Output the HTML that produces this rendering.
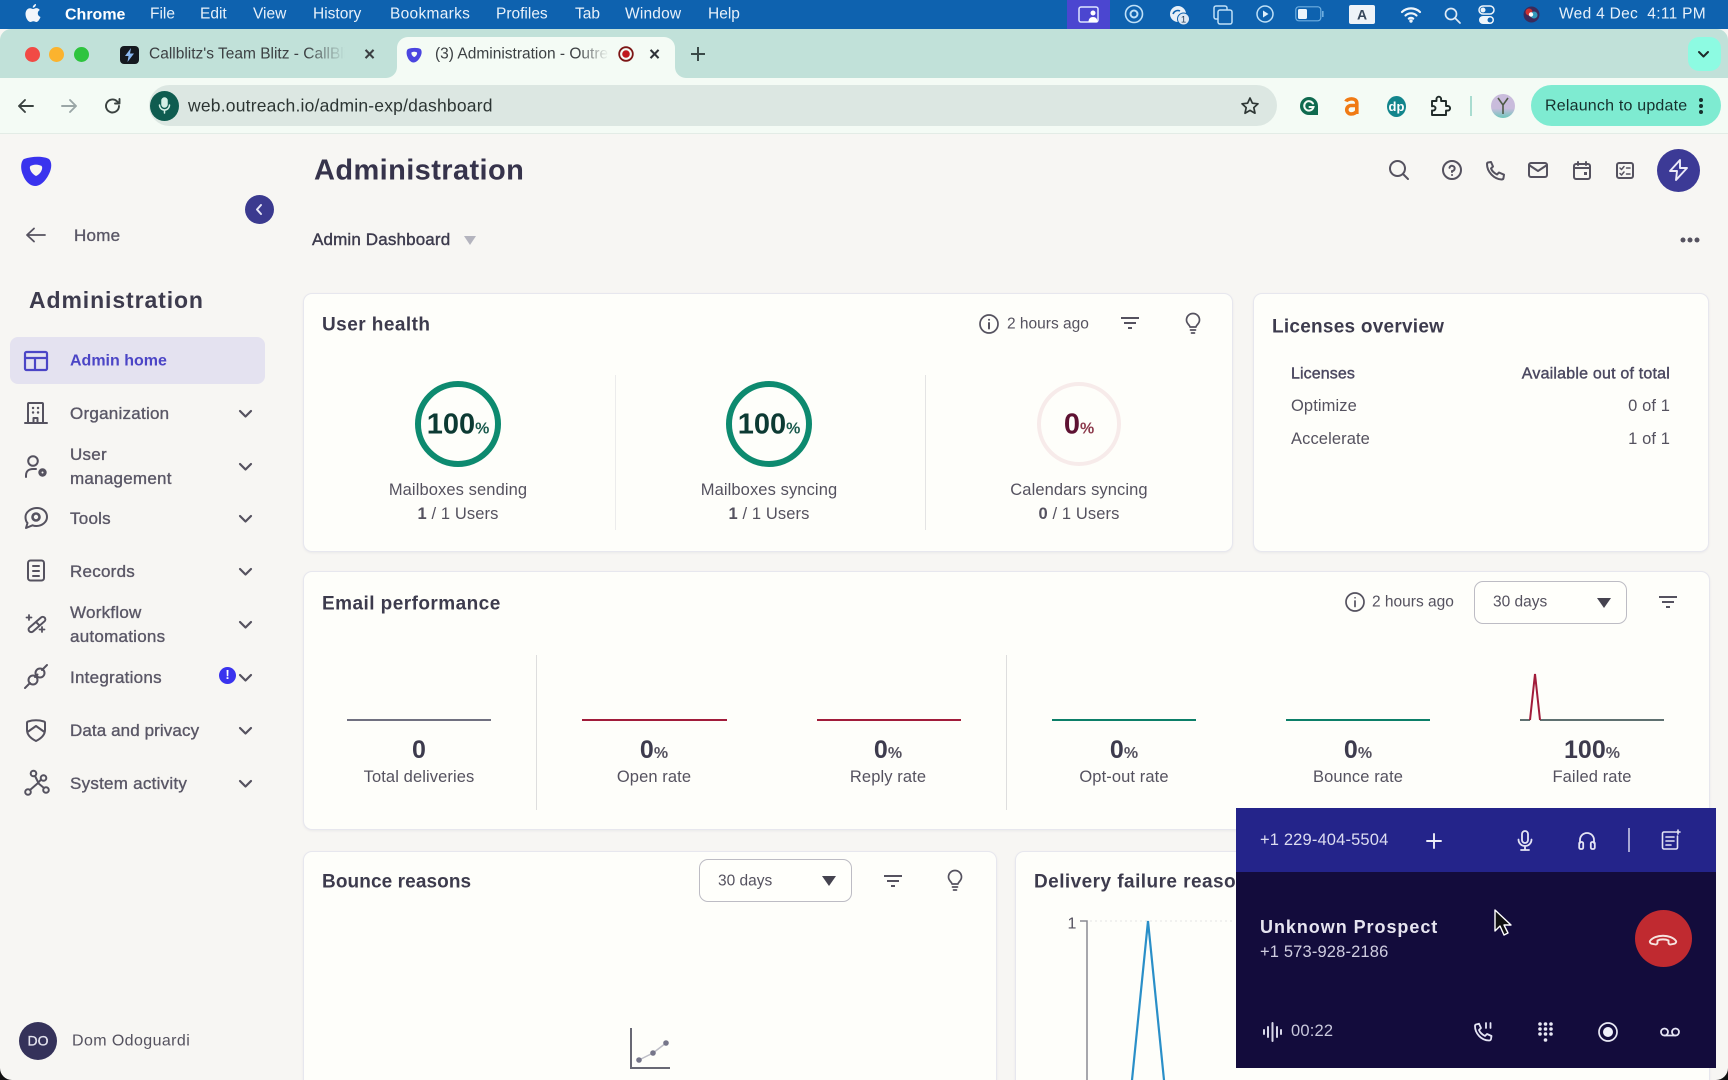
<!DOCTYPE html>
<html lang="en"><head><meta charset="utf-8"><title>Administration - Outreach</title>
<style>
*{box-sizing:border-box}
html,body{margin:0;padding:0;width:1728px;height:1080px;overflow:hidden;background:#f7f6f3;font-family:"Liberation Sans",sans-serif;color:#55525f}
#root{position:relative;width:1728px;height:1080px;overflow:hidden;background:#f7f6f3}
.a{position:absolute}
.t{position:absolute;white-space:nowrap;transform:translateY(calc(-50% + 1px));line-height:1.2}
.c{position:absolute;white-space:nowrap;transform:translate(-50%,calc(-50% + 1px));line-height:1.2}
.r{position:absolute;white-space:nowrap;transform:translate(-100%,calc(-50% + 1px));line-height:1.2}
.m{font-size:15.5px;color:#e8f1fa;margin-top:1px}
.nav{font-size:17px;letter-spacing:.25px;color:#5a5766;-webkit-text-stroke:.35px #5a5766;margin-top:1px}
.card{position:absolute;background:#fefefa;border:1px solid #e7e7ee;border-radius:9px;box-shadow:0 1px 2px rgba(90,90,130,.08)}
.h{font-size:19px;font-weight:bold;color:#3d3b4d;letter-spacing:.45px;margin-top:2px}
.lb{font-size:16.5px;letter-spacing:.1px;color:#55525f;margin-top:1px}
.num{font-size:25px;font-weight:bold;color:#3d3b4d}
.num small{font-size:16px;font-weight:bold;color:#55525f}
svg{position:absolute;overflow:visible;fill:none}
.i{stroke:#55525f;stroke-width:2;stroke-linecap:round;stroke-linejoin:round}
.w{stroke:#e4e4f4;stroke-width:1.8;stroke-linecap:round;stroke-linejoin:round}
.sel{position:absolute;width:153px;height:43px;border:1px solid #bdbcc4;border-radius:9px;background:#fffffb}
.fade{position:absolute;overflow:hidden;white-space:nowrap;transform:translateY(calc(-50% + 1px));font-size:15.5px;color:#3c4043;line-height:1.2}
</style></head><body><div id="root">

<!-- menu bar -->
<div class="a" style="left:0;top:0;width:1728px;height:29px;background:#0e62af"></div>
<svg style="left:25px;top:4px" width="16" height="20" viewBox="0 0 16 20"><path fill="#f2f6fb" d="M11 0c.2 1.600-1.300 3.700-3.200 3.700C7.500 2 9.300.2 11 0zM8 5c1 0 1.900-.9 3.400-.9 1.300 0 2.600.7 3.400 1.900-3 1.800-2.500 5.800.7 7-.8 2.200-2.400 5-4.100 5-1.100 0-1.600-.7-3-.7s-2 .7-3 .7C3.100 18 .5 13.800.5 10 .5 6.400 2.700 4.200 5 4.200 6.300 4.200 7.200 5 8 5z"/></svg>
<div class="t m" style="left:65px;top:13px;font-weight:bold;color:#fff;font-size:16px">Chrome</div>
<div class="t m" style="left:150px;top:13px">File</div>
<div class="t m" style="left:200px;top:13px">Edit</div>
<div class="t m" style="left:253px;top:13px">View</div>
<div class="t m" style="left:313px;top:13px">History</div>
<div class="t m" style="left:390px;top:13px;letter-spacing:.3px">Bookmarks</div>
<div class="t m" style="left:496px;top:13px">Profiles</div>
<div class="t m" style="left:575px;top:13px">Tab</div>
<div class="t m" style="left:625px;top:13px;letter-spacing:.2px">Window</div>
<div class="t m" style="left:708px;top:13px">Help</div>

<div class="a" style="left:1067px;top:0;width:43px;height:29px;background:#4b46d0"></div>
<svg style="left:1078px;top:6px" width="22" height="17" viewBox="0 0 22 17"><rect x="1" y="1" width="19" height="15" rx="2" stroke="#dfe6ff" stroke-width="1.500"/><circle cx="15" cy="7" r="2.500" fill="#fff"/><path fill="#fff" d="M10.500 16c0-3.500 2-5 4.500-5s4.500 1.500 4.500 5z"/></svg>
<svg style="left:1124px;top:4px" width="20" height="20"><circle cx="10" cy="10" r="8.500" stroke="#bfe0f7" stroke-width="1.600"/><circle cx="10" cy="10" r="3.500" stroke="#bfe0f7" stroke-width="2"/></svg>
<svg style="left:1168px;top:3px" width="24" height="24"><circle cx="10" cy="11" r="8" fill="#e8f0f8"/><path d="M5 11a5 5 0 0 1 7-3" stroke="#0e62af" stroke-width="1.500"/><circle cx="15.500" cy="16" r="6" fill="#dfe9f4" stroke="#0e62af"/><text x="15.500" y="19.500" font-size="9.500" fill="#27405c" text-anchor="middle" font-family="Liberation Sans">1</text></svg>
<svg style="left:1213px;top:5px" width="20" height="20" stroke="#bfe0f7" stroke-width="1.500"><rect x="1" y="1" width="13" height="13" rx="2"/><rect x="5" y="5" width="14" height="14" rx="2" fill="#0e62af"/></svg>
<svg style="left:1256px;top:5px" width="18" height="18"><circle cx="9" cy="9" r="8" stroke="#bfe0f7" stroke-width="1.500"/><path d="M7 5.500l5.500 3.500L7 12.500z" fill="#dff0fb"/></svg>
<svg style="left:1295px;top:6px" width="30" height="16"><rect x=".8" y=".8" width="25" height="14" rx="3" stroke="#6eaee0" stroke-width="1.200"/><rect x="3" y="3" width="9" height="10" rx="1.500" fill="#eef5fb"/><rect x="27" y="5" width="1.600" height="6" fill="#6eaee0"/></svg>
<div class="a" style="left:1349px;top:5px;width:26px;height:19px;background:#eef3f8;border-radius:2px"></div>
<div class="c" style="left:1362px;top:13.500px;font-size:14px;font-weight:bold;color:#36465a">A</div>
<svg style="left:1400px;top:6px" width="22" height="17" viewBox="0 0 22 17" stroke="#eef5fb" stroke-width="2.200" stroke-linecap="round"><path d="M2 6a13 13 0 0 1 18 0M5.500 9.500a8 8 0 0 1 11 0M8.800 12.600a3.500 3.500 0 0 1 4.400 0"/><circle cx="11" cy="15" r=".6" fill="#eef5fb"/></svg>
<svg style="left:1444px;top:7px" width="17" height="17" stroke="#dfeaf5" stroke-width="1.700" stroke-linecap="round"><circle cx="7" cy="7" r="5.500"/><path d="M11 11l5 5"/></svg>
<svg style="left:1478px;top:5px" width="18" height="20"><rect x="1" y="1" width="15" height="8" rx="4" stroke="#eef5fb" stroke-width="1.500"/><circle cx="5" cy="5" r="2.500" fill="#eef5fb"/><rect x="1" y="11" width="15" height="8" rx="4" fill="#eef5fb"/><circle cx="12" cy="15" r="2.500" fill="#0e62af"/></svg>
<svg style="left:1523px;top:6px" width="17" height="17"><circle cx="8.500" cy="8.500" r="8" fill="#3b2a5a"/><circle cx="6" cy="6" r="3.500" fill="#c33"/><circle cx="11" cy="9" r="3.500" fill="#39b"/><circle cx="8" cy="8.500" r="2.200" fill="#fff"/></svg>
<div class="t m" style="left:1559px;top:13px;font-size:15.500px;letter-spacing:.3px;white-space:pre">Wed 4 Dec  4:11 PM</div>

<!-- tab strip -->
<div class="a" style="left:0;top:29px;width:1728px;height:49px;background:#c1e1d9;border-radius:11px 11px 0 0"></div>
<div class="a" style="left:25px;top:46.500px;width:15px;height:15px;border-radius:50%;background:#f14a45"></div>
<div class="a" style="left:49px;top:46.500px;width:15px;height:15px;border-radius:50%;background:#fbb32e"></div>
<div class="a" style="left:73.500px;top:46.500px;width:15px;height:15px;border-radius:50%;background:#2ec43f"></div>
<div class="a" style="left:120px;top:46px;width:19px;height:18px;border-radius:4px;background:#15191f"></div>
<svg style="left:124px;top:48px" width="11" height="14" viewBox="0 0 11 14"><path fill="#8bb8f0" d="M7 0L1 8h3.500L3.500 14 10 5.500H6z"/></svg>
<div class="fade" style="left:149px;top:54px;width:196px;-webkit-mask-image:linear-gradient(90deg,#000 80%,transparent);mask-image:linear-gradient(90deg,#000 80%,transparent)">Callblitz's Team Blitz - CallBlitz</div>
<div class="c" style="left:369.500px;top:55px;font-size:19px;font-weight:bold;color:#3c4043">×</div>
<div class="a" style="left:397px;top:37px;width:278px;height:42px;background:#f4fbf5;border-radius:11px 11px 0 0"></div>
<svg style="left:386px;top:67px" width="11" height="11"><path d="M0 11A11 11 0 0 0 11 0V11z" fill="#f4fbf5"/></svg>
<svg style="left:675px;top:67px" width="11" height="11"><path d="M11 11A11 11 0 0 1 0 0V11z" fill="#f4fbf5"/></svg>
<svg style="left:406px;top:46px" width="16" height="18" viewBox="0 0 32 30"><path fill="#4a45e0" d="M4 3C12 0 24 0 29 3c3 3 3 9 0 15-4 8-9 12-14 12-5 0-10-5-12-11C0 12 1 5 4 3z"/><path fill="#f4fbf5" d="M11 10c3-2 8-2 11 0 1 3-2 8-5.500 9C13 18 10 13 11 10z"/></svg>
<div class="fade" style="left:435px;top:54px;width:174px;-webkit-mask-image:linear-gradient(90deg,#000 82%,transparent);mask-image:linear-gradient(90deg,#000 82%,transparent)">(3) Administration - Outreach</div>
<svg style="left:618px;top:46px" width="16" height="16"><circle cx="8" cy="8" r="6.800" stroke="#7c1515" stroke-width="1.800"/><circle cx="8" cy="8" r="3.800" fill="#c0191f"/></svg>
<div class="c" style="left:654.500px;top:55px;font-size:19px;font-weight:bold;color:#30343a">×</div>
<svg style="left:691px;top:47px" width="14" height="14" stroke="#3a4a48" stroke-width="2"><path d="M7 0v14M0 7h14"/></svg>
<div class="a" style="left:1688px;top:37px;width:33px;height:34px;border-radius:11px;background:#8dfbe2"></div>
<svg style="left:1698px;top:51px" width="11" height="7" stroke="#1e2a2a" stroke-width="2" stroke-linecap="round" stroke-linejoin="round"><path d="M1 1l4.500 4.500L10 1"/></svg>

<!-- toolbar -->
<div class="a" style="left:0;top:78px;width:1728px;height:56px;background:#f4fbf5;border-bottom:1px solid #e3ece6"></div>
<svg style="left:17px;top:98px" width="18" height="16" stroke="#3a4240" stroke-width="1.900" stroke-linecap="round" stroke-linejoin="round"><path d="M16 8H2M8 2L2 8l6 6"/></svg>
<svg style="left:60px;top:98px" width="18" height="16" stroke="#9aa6a6" stroke-width="1.900" stroke-linecap="round" stroke-linejoin="round"><path d="M2 8h14M10 2l6 6-6 6"/></svg>
<svg style="left:104px;top:97px" width="18" height="18" stroke="#3a4240" stroke-width="1.900" stroke-linecap="round" stroke-linejoin="round"><path d="M15 9a6.500 6.500 0 1 1-2-4.700L15.500 6.500M15.500 2v4.500H11"/></svg>
<div class="a" style="left:149px;top:85px;width:1128px;height:41px;border-radius:21px;background:#dce7e2"></div>
<div class="a" style="left:150px;top:91px;width:29px;height:30px;border-radius:50%;background:#0f5c50"></div>
<svg style="left:158px;top:97px" width="13" height="18" stroke="#d5efe6" stroke-width="1.500" stroke-linecap="round"><rect x="4" y="1" width="5" height="9" rx="2.500" fill="#d5efe6"/><path d="M1.500 8a5 5 0 0 0 10 0M6.500 13v3"/></svg>
<div class="t" style="left:188px;top:105px;font-size:17.500px;color:#2c3533;letter-spacing:.2px">web.outreach.io/admin-exp/dashboard</div>
<svg style="left:1240px;top:96px" width="20" height="20" viewBox="0 0 20 20" stroke="#2e3735" stroke-width="1.700" stroke-linejoin="round"><path d="M10 2l2.400 5.200 5.600.6-4.200 3.800 1.200 5.600L10 14.400l-5 2.800 1.200-5.600L2 7.800l5.600-.6z"/></svg>
<svg style="left:1300px;top:97px" width="18" height="18"><path fill="#0f6a4f" d="M9 0a9 9 0 1 0 0 18h9V9a9 9 0 0 0-9-9z"/><path d="M13 6.500A4.700 4.700 0 1 0 13.500 10H9.500" stroke="#f4fbf5" stroke-width="2" stroke-linecap="round"/></svg>
<svg style="left:1344px;top:96px" width="15" height="20" stroke="#f07a14" stroke-width="3.600"><path d="M2 5.500C3 2.500 12.500 1 12.800 7v11"/><path d="M12.800 9.500H7a4 4 0 0 0 0 8.500c3 0 5.800-1.500 5.800-4"/></svg>
<svg style="left:1387px;top:96px" width="19" height="21"><ellipse cx="9.500" cy="10.500" rx="9.500" ry="10.500" fill="#12858c"/><text x="9.500" y="15" font-size="13" font-weight="bold" fill="#fff" text-anchor="middle" font-family="Liberation Sans">dp</text></svg>
<svg style="left:1430px;top:96px" width="20" height="21" viewBox="0 0 20 21" stroke="#1f2a28" stroke-width="1.900" stroke-linejoin="round"><path d="M2 5h4.500V3a2.300 2.300 0 0 1 4.600 0v2H16v5h1.800a2.300 2.300 0 0 1 0 4.600H16V19H2v-4.500c2.500.5 3.500-1 3.500-2.300S4 9.600 2 10.300z"/></svg>
<div class="a" style="left:1470px;top:96px;width:2px;height:20px;background:#a9dcd0"></div>
<div class="a" style="left:1491px;top:94px;width:24px;height:24px;border-radius:50%;background:linear-gradient(#c9bcdc 60%,#6fc6bb)"></div>
<svg style="left:1497px;top:97px" width="12" height="18" stroke="#4e5a46" stroke-width="1.600"><path d="M1 1l5 7 5-7M6 8v9"/></svg>
<div class="a" style="left:1531px;top:85px;width:190px;height:41px;border-radius:21px;background:#7eebd1"></div>
<div class="t" style="left:1545px;top:105px;font-size:16px;letter-spacing:.2px;color:#16302d">Relaunch to update</div>
<svg style="left:1698px;top:97px;fill:#16302d" width="6" height="18"><circle cx="3" cy="3" r="2"/><circle cx="3" cy="9" r="2"/><circle cx="3" cy="15" r="2"/></svg>

<!-- sidebar -->
<svg style="left:20px;top:155px" width="32" height="32" viewBox="0 0 32 30"><path fill="#3a33ee" d="M4 3C12 0 24 0 29 3c3 3 3 9 0 15-4 8-9 12-14 12-5 0-10-5-12-11C0 12 1 5 4 3z"/><path fill="#f8f6f0" d="M10 10.500c3-2.500 9-2.500 12 0 1 3-2 8-6 9.500-3.500-1.500-7-6.500-6-9.500z"/></svg>
<div class="a" style="left:244.500px;top:194.500px;width:29px;height:29px;border-radius:50%;background:#3b3a8f"></div>
<svg style="left:255px;top:204px" width="8" height="11" stroke="#e6e6f6" stroke-width="2" stroke-linecap="round" stroke-linejoin="round"><path d="M6 1L2 5.500 6 10"/></svg>
<svg style="left:26px;top:227px" width="20" height="16" stroke="#55525f" stroke-width="1.800" stroke-linecap="round" stroke-linejoin="round"><path d="M19 8H1M8 1.500L1 8l7 6.500"/></svg>
<div class="t nav" style="left:74px;top:234px">Home</div>
<div class="t" style="left:29px;top:300px;font-size:23px;font-weight:bold;color:#3d3b4d;letter-spacing:.9px">Administration</div>

<div class="a" style="left:10px;top:337px;width:255px;height:47px;border-radius:8px;background:#e4e2f0"></div>
<svg style="left:24px;top:351px" width="24" height="20" stroke="#4b45c6" stroke-width="2.200"><rect x="1" y="1" width="22" height="18" rx="1.500"/><path d="M1 7h22M11 7v12"/></svg>
<div class="t" style="left:70px;top:360px;font-size:16px;font-weight:bold;color:#4b45c6">Admin home</div>

<svg style="left:24px;top:402px" width="24" height="22" viewBox="0 0 24 22" class="i"><path d="M1 21h22M4 21V2a1 1 0 0 1 1-1h13a1 1 0 0 1 1 1v19M9.500 21v-5h4v5"/><path d="M9 6h.1M14 6h.1M9 10.500h.1M14 10.500h.1" stroke-width="2.400"/></svg>
<div class="t nav" style="left:70px;top:412px">Organization</div>
<svg style="left:25px;top:455px" width="24" height="23" viewBox="0 0 24 23" class="i"><circle cx="8" cy="6" r="4.800"/><path d="M1 22v-1.500C1 16 4 14 8 14h3"/><circle cx="17.500" cy="17.500" r="2.600" stroke-width="3.200"/></svg>
<div class="t nav" style="left:70px;top:453px">User</div>
<div class="t nav" style="left:70px;top:477px">management</div>
<svg style="left:24px;top:507px" width="24" height="23" viewBox="0 0 24 23" class="i"><path d="M13 1c6 0 10 4 10 9s-5 9-10.500 9c-1.500 0-3-.3-4-.7L2 21l1.500-5C2 14.500 1.500 12.500 1.500 10 1.500 5 7 1 13 1z"/><circle cx="12" cy="10" r="3.500" stroke-width="2.600"/></svg>
<div class="t nav" style="left:70px;top:517px">Tools</div>
<svg style="left:27px;top:559px" width="18" height="24" viewBox="0 0 18 24" class="i"><rect x="1" y="1.500" width="16" height="20" rx="2.500"/><path d="M6 7h6M6 12h6M6 17h6"/></svg>
<div class="t nav" style="left:70px;top:570px">Records</div>
<svg style="left:26px;top:613px" width="22" height="21" viewBox="0 0 22 21" class="i"><path d="M3.500 14.500L15 4.500a2.500 2.500 0 0 1 3.500 3.800L7 18.500a2.500 2.500 0 0 1-3.500-4zM10 9l3 3"/><path d="M3 2v5M.5 4.500h5M16 14v5M13.500 16.500h5" stroke-width="1.800"/></svg>
<div class="t nav" style="left:70px;top:611px">Workflow</div>
<div class="t nav" style="left:70px;top:635px">automations</div>
<svg style="left:24px;top:664px" width="24" height="25" viewBox="0 0 24 25" class="i"><path d="M1 24l5-5M23 1l-5 5"/><circle cx="9" cy="16" r="4.500"/><circle cx="16" cy="9" r="4.500"/><path d="M11 13l2.500-2.500"/></svg>
<div class="t nav" style="left:70px;top:676px">Integrations</div>
<div class="a" style="left:219px;top:667px;width:17px;height:17px;border-radius:50%;background:#3a33ee"></div>
<div class="c" style="left:227.500px;top:674px;font-size:13px;font-weight:bold;color:#fff">!</div>
<svg style="left:26px;top:718px" width="20" height="24" viewBox="0 0 20 24" class="i"><path d="M2 3.500c5 -1.500 11-1.500 16 0 .8.200 1 .8 1 1.500v7c0 5-4 8.500-9 11-5-2.500-9-6-9-11V5c0-.7.200-1.300 1-1.500zM1.500 14l8.500-6 8.500 6"/></svg>
<div class="t nav" style="left:70px;top:729px;letter-spacing:.1px">Data and privacy</div>
<svg style="left:24px;top:770px" width="26" height="26" viewBox="0 0 26 26" class="i"><circle cx="9.500" cy="3.500" r="2.800"/><circle cx="19.500" cy="8" r="2.800"/><circle cx="22" cy="20" r="2.800"/><circle cx="4" cy="22" r="2.800"/><path d="M11 6l3 6M17 9.500L14 13M6 20l8-7 6 5"/></svg>
<div class="t nav" style="left:70px;top:782px">System activity</div>
<svg style="left:239px;top:410px" width="13" height="8" class="i"><path d="M1 1l5.500 5.500L12 1" stroke-width="2.200"/></svg>
<svg style="left:239px;top:463px" width="13" height="8" class="i"><path d="M1 1l5.500 5.500L12 1" stroke-width="2.200"/></svg>
<svg style="left:239px;top:515px" width="13" height="8" class="i"><path d="M1 1l5.500 5.500L12 1" stroke-width="2.200"/></svg>
<svg style="left:239px;top:568px" width="13" height="8" class="i"><path d="M1 1l5.500 5.500L12 1" stroke-width="2.200"/></svg>
<svg style="left:239px;top:621px" width="13" height="8" class="i"><path d="M1 1l5.500 5.500L12 1" stroke-width="2.200"/></svg>
<svg style="left:239px;top:674px" width="13" height="8" class="i"><path d="M1 1l5.500 5.500L12 1" stroke-width="2.200"/></svg>
<svg style="left:239px;top:727px" width="13" height="8" class="i"><path d="M1 1l5.500 5.500L12 1" stroke-width="2.200"/></svg>
<svg style="left:239px;top:780px" width="13" height="8" class="i"><path d="M1 1l5.500 5.500L12 1" stroke-width="2.200"/></svg>
<div class="a" style="left:19px;top:1022px;width:38px;height:38px;border-radius:50%;background:#35325a"></div>
<div class="c" style="left:38px;top:1040px;font-size:14px;color:#e4e3ee;-webkit-text-stroke:.3px #e4e3ee">DO</div>
<div class="t" style="left:72px;top:1040px;font-size:16px;color:#55525f;letter-spacing:.4px">Dom Odoguardi</div>

<!-- header -->
<div class="t" style="left:314px;top:170px;font-size:29px;font-weight:bold;color:#36334b;letter-spacing:.4px">Administration</div>
<svg style="left:1389px;top:160px" width="20" height="20" class="i"><circle cx="8.500" cy="8.500" r="7.500"/><path d="M14 14l5 5"/></svg>
<svg style="left:1442px;top:160px" width="20" height="20" class="i"><circle cx="10" cy="10" r="9"/><path d="M7.500 7.800A2.600 2.600 0 1 1 10 11v1M10 15h.1"/></svg>
<svg style="left:1486px;top:161px" width="19" height="19" viewBox="0 0 19 19" class="i"><path d="M2 1.500l3-.5 2 4.500L5 7.500c1 2.500 3 4.500 6 6l2-2 5 2.200-.5 3.300c-.2 1-1 1.500-2 1.500C8 18 1 11 1 3c0-.7.400-1.300 1-1.500z"/></svg>
<svg style="left:1528px;top:162px" width="20" height="16" class="i"><rect x="1" y="1" width="18" height="14" rx="2"/><path d="M1 3l9 6 9-6"/></svg>
<svg style="left:1573px;top:161px" width="18" height="19" class="i"><rect x="1" y="3" width="16" height="15" rx="2"/><path d="M1 7h16M5 1v3M13 1v3"/><rect x="11" y="11" width="3" height="3" fill="#55525f" stroke="none"/></svg>
<svg style="left:1616px;top:162px" width="18" height="17" class="i"><rect x="1" y="1" width="16" height="15" rx="2"/><path d="M4 6l1.500 1.500L8 4.500M4 11.500L5.500 13 8 10M10.500 6h3.500M10.500 12h3.500" stroke-width="1.500"/></svg>
<div class="a" style="left:1656.500px;top:148.500px;width:43px;height:43px;border-radius:50%;background:#3c3a96"></div>
<svg style="left:1668px;top:159px" width="21" height="22" viewBox="0 0 21 22" stroke="#eceaf8" stroke-width="1.900" stroke-linejoin="round"><path d="M12 1L2 12h7l-1 9 11-12h-7z"/></svg>
<div class="t" style="left:312px;top:239px;font-size:17px;letter-spacing:.15px;color:#3d3b4d;-webkit-text-stroke:.4px #3d3b4d">Admin Dashboard</div>
<svg style="left:464px;top:236px" width="12" height="9"><path d="M0 0h12L6 9z" fill="#b4b4be"/></svg>
<svg style="left:1680px;top:237px;fill:#55525f" width="20" height="6"><circle cx="3" cy="3" r="2.500"/><circle cx="10" cy="3" r="2.500"/><circle cx="17" cy="3" r="2.500"/></svg>

<!-- user health -->
<div class="card" style="left:303px;top:293px;width:930px;height:259px"></div>
<div class="t h" style="left:322px;top:323px">User health</div>
<svg style="left:979px;top:314px" width="20" height="20" class="i"><circle cx="10" cy="10" r="9" stroke-width="1.700"/><path d="M10 9v5.500M10 5.800h.1"/></svg>
<div class="t" style="left:1007px;top:324px;font-size:15.500px;color:#55525f">2 hours ago</div>
<svg style="left:1121px;top:317px" width="18" height="13" stroke="#55525f" stroke-width="1.900"><path d="M0 1h18M3 6h12M7 11h4"/></svg>
<svg style="left:1185px;top:312px" width="16" height="23" class="i"><path d="M5 15c0-2-3.500-3-3.500-7a6.500 6.500 0 1 1 13 0c0 4-3.500 5-3.500 7zM5.500 18h5M6.500 21h3" stroke-width="1.700"/></svg>

<svg style="left:415px;top:381px" width="86" height="86"><circle cx="43" cy="43" r="40" stroke="#0d8a6f" stroke-width="6"/></svg>
<div class="c" style="left:458px;top:424px;font-size:29px;font-weight:bold;color:#0c3a33">100<span style="font-size:16px;color:#1a5a4d">%</span></div>
<div class="c lb" style="left:458px;top:489px">Mailboxes sending</div>
<div class="c lb" style="left:458px;top:513px"><b>1</b> / 1 Users</div>
<div class="a" style="left:615px;top:375px;width:1px;height:155px;background:#ececec"></div>
<svg style="left:726px;top:381px" width="86" height="86"><circle cx="43" cy="43" r="40" stroke="#0d8a6f" stroke-width="6"/></svg>
<div class="c" style="left:769px;top:424px;font-size:29px;font-weight:bold;color:#0c3a33">100<span style="font-size:16px;color:#1a5a4d">%</span></div>
<div class="c lb" style="left:769px;top:489px">Mailboxes syncing</div>
<div class="c lb" style="left:769px;top:513px"><b>1</b> / 1 Users</div>
<div class="a" style="left:925px;top:375px;width:1px;height:155px;background:#e4e4e4"></div>
<svg style="left:1036px;top:381px" width="86" height="86"><circle cx="43" cy="43" r="40" stroke="#f7ebea" stroke-width="4"/></svg>
<div class="c" style="left:1079px;top:424px;font-size:29px;font-weight:bold;color:#5e1232">0<span style="font-size:16px;color:#8c3a4c">%</span></div>
<div class="c lb" style="left:1079px;top:489px">Calendars syncing</div>
<div class="c lb" style="left:1079px;top:513px"><b>0</b> / 1 Users</div>

<!-- licenses -->
<div class="card" style="left:1253px;top:293px;width:456px;height:259px"></div>
<div class="t h" style="left:1272px;top:325px;letter-spacing:.25px">Licenses overview</div>
<div class="t" style="left:1291px;top:373px;font-size:16px;letter-spacing:.1px;color:#4b4860;-webkit-text-stroke:.4px #4b4860">Licenses</div>
<div class="r" style="left:1670px;top:373px;font-size:16px;letter-spacing:.2px;color:#4b4860;-webkit-text-stroke:.4px #4b4860">Available out of total</div>
<div class="t lb" style="left:1291px;top:405px">Optimize</div>
<div class="r lb" style="left:1670px;top:405px">0 of 1</div>
<div class="t lb" style="left:1291px;top:438px">Accelerate</div>
<div class="r lb" style="left:1670px;top:438px">1 of 1</div>

<!-- email perf -->
<div class="card" style="left:303px;top:571px;width:1407px;height:259px"></div>
<div class="t h" style="left:322px;top:602px">Email performance</div>
<svg style="left:1345px;top:592px" width="20" height="20" class="i"><circle cx="10" cy="10" r="9" stroke-width="1.700"/><path d="M10 9v5.500M10 5.800h.1" stroke-width="1.700"/></svg>
<div class="t" style="left:1372px;top:602px;font-size:15.500px;color:#55525f">2 hours ago</div>
<div class="sel" style="left:1474px;top:581px"></div>
<div class="t" style="left:1493px;top:602px;font-size:15.500px;color:#55525f">30 days</div>
<svg style="left:1597px;top:598px" width="14" height="10"><path d="M0 0h14L7 10z" fill="#45434f"/></svg>
<svg style="left:1659px;top:596px" width="18" height="13" stroke="#55525f" stroke-width="1.900"><path d="M0 1h18M3 6h12M7 11h4"/></svg>
<div class="a" style="left:536px;top:655px;width:1px;height:155px;background:#dedede"></div>
<div class="a" style="left:1006px;top:655px;width:1px;height:155px;background:#dedede"></div>
<svg style="left:0;top:0" width="1728" height="1080" stroke-width="2">
<path d="M347 720h144" stroke="#707080"/>
<path d="M582 720h145M817 720h144" stroke="#a11c3a"/>
<path d="M1052 720h144M1286 720h144" stroke="#0c7f68"/>
<path d="M1520 720h10M1540 720h124" stroke="#5f7070"/>
<path d="M1530 720l5-46 5 46" stroke="#a11c3a"/>
</svg>
<div class="c num" style="left:419px;top:749px">0</div>
<div class="c lb" style="left:419px;top:776px">Total deliveries</div>
<div class="c num" style="left:654px;top:749px">0<small>%</small></div>
<div class="c lb" style="left:654px;top:776px">Open rate</div>
<div class="c num" style="left:888px;top:749px">0<small>%</small></div>
<div class="c lb" style="left:888px;top:776px">Reply rate</div>
<div class="c num" style="left:1124px;top:749px">0<small>%</small></div>
<div class="c lb" style="left:1124px;top:776px">Opt-out rate</div>
<div class="c num" style="left:1358px;top:749px">0<small>%</small></div>
<div class="c lb" style="left:1358px;top:776px">Bounce rate</div>
<div class="c num" style="left:1592px;top:749px">100<small>%</small></div>
<div class="c lb" style="left:1592px;top:776px">Failed rate</div>

<!-- bounce -->
<div class="card" style="left:303px;top:851px;width:694px;height:260px"></div>
<div class="t h" style="left:322px;top:880px;letter-spacing:.1px">Bounce reasons</div>
<div class="sel" style="left:699px;top:859px"></div>
<div class="t" style="left:718px;top:881px;font-size:15.500px;color:#55525f">30 days</div>
<svg style="left:822px;top:876px" width="14" height="10"><path d="M0 0h14L7 10z" fill="#45434f"/></svg>
<svg style="left:884px;top:875px" width="18" height="13" stroke="#55525f" stroke-width="1.900"><path d="M0 1h18M3 6h12M7 11h4"/></svg>
<svg style="left:947px;top:869px" width="16" height="23" class="i"><path d="M5 15c0-2-3.500-3-3.500-7a6.500 6.500 0 1 1 13 0c0 4-3.500 5-3.500 7zM5.500 18h5M6.500 21h3" stroke-width="1.700"/></svg>
<svg style="left:628px;top:1026px" width="44" height="44"><path d="M3 2v40h39" stroke="#686874" stroke-width="2"/><path d="M11 34l14-7 13-10" stroke="#bdbdc6" stroke-width="1.500"/><circle cx="11" cy="34" r="2.800" fill="#76768a"/><circle cx="25" cy="27" r="2.800" fill="#76768a"/><circle cx="38" cy="17" r="2.800" fill="#76768a"/></svg>

<!-- delivery -->
<div class="card" style="left:1015px;top:851px;width:695px;height:260px"></div>
<div class="t h" style="left:1034px;top:880px">Delivery failure reasons</div>
<div class="c" style="left:1072px;top:923px;font-size:16px;color:#55525f">1</div>
<svg style="left:0;top:0" width="1728" height="1080">
<path d="M1080 921h7v170" stroke="#8a8a92" stroke-width="1.500"/>
<path d="M1090 921h145" stroke="#e4e4e4" stroke-dasharray="2 3"/>
<path d="M1130 1100l18-179 18 179" stroke="#2a8fc8" stroke-width="2.200"/>
</svg>

<!-- phone panel -->
<div class="a" style="left:1236px;top:808px;width:480px;height:64px;background:#24248a"></div>
<div class="a" style="left:1236px;top:872px;width:480px;height:196px;background:#130c3c"></div>
<div class="t" style="left:1260px;top:840px;font-size:16.500px;letter-spacing:.15px;color:#dcdcf0">+1 229-404-5504</div>
<svg style="left:1426px;top:833px" width="16" height="16" stroke="#eeeef8" stroke-width="1.900" stroke-linecap="round"><path d="M8 1v14M1 8h14"/></svg>
<svg style="left:1517px;top:830px" width="16" height="21" class="w"><rect x="5" y="1" width="6" height="12" rx="3"/><path d="M1.500 9.500a6.500 6.500 0 0 0 13 0M8 16v4M4 20h8"/></svg>
<svg style="left:1578px;top:831px" width="18" height="19" class="w"><path d="M2 12V9a7 7 0 0 1 14 0v3"/><rect x="1.200" y="11" width="4" height="7" rx="1.500"/><rect x="12.800" y="11" width="4" height="7" rx="1.500"/></svg>
<div class="a" style="left:1628px;top:828px;width:2px;height:24px;background:#a7a7d4"></div>
<svg style="left:1661px;top:830px" width="20" height="20" class="w"><path d="M14 2H3a1.500 1.500 0 0 0-1.500 1.500v14A1.500 1.500 0 0 0 3 19h12a1.500 1.500 0 0 0 1.500-1.500V6M5 7h8M5 11h8M5 15h5M17 0v4M15 2h4" stroke-width="1.600"/></svg>
<div class="t" style="left:1260px;top:927px;font-size:18px;font-weight:bold;color:#e6e4f0;letter-spacing:.95px">Unknown Prospect</div>
<div class="t" style="left:1260px;top:952px;font-size:16.500px;letter-spacing:.15px;color:#cfcde0">+1 573-928-2186</div>
<div class="a" style="left:1634.500px;top:909.500px;width:57px;height:57px;border-radius:50%;background:#c02a30"></div>
<svg style="left:1649px;top:932px" width="28" height="14" viewBox="0 0 28 14"><path d="M1 9C6 2 22 2 27 9c.6 1-.5 2.500-1.500 2.700l-4 .8c-1 .2-2-.8-2-1.800V8.500c-3-1.500-8-1.500-11 0v2.200c0 1-1 2-2 1.800l-4-.8C1.500 11.500.4 10 1 9z" stroke="#f6e3df" stroke-width="1.900"/></svg>
<svg style="left:1263px;top:1022px" width="19" height="20" stroke="#d8d8ea" stroke-width="2" stroke-linecap="round"><path d="M1 8v4M5 5v10M9.500 1v18M14 5v10M18 8v4"/></svg>
<div class="t" style="left:1291px;top:1031px;font-size:16.500px;letter-spacing:.2px;color:#c9c8dc">00:22</div>
<svg style="left:1474px;top:1022px" width="19" height="20" viewBox="0 0 19 20" class="w"><path d="M2 2.500l3-.8 2 4.300-2 2c1 2.500 3 4.500 6 6l2-2 4.500 2-.5 3c-.2 1-1 1.500-2 1.500C7 18.500 1 11 1 4c0-.7.400-1.300 1-1.500zM12 1v5M16.500 1v5"/></svg>
<svg style="left:1538px;top:1022px;fill:#e8e8f4" width="16" height="21"><circle cx="2" cy="2" r="1.800"/><circle cx="7.500" cy="2" r="1.800"/><circle cx="13" cy="2" r="1.800"/><circle cx="2" cy="7" r="1.800"/><circle cx="7.500" cy="7" r="1.800"/><circle cx="13" cy="7" r="1.800"/><circle cx="2" cy="12" r="1.800"/><circle cx="7.500" cy="12" r="1.800"/><circle cx="13" cy="12" r="1.800"/><circle cx="7.500" cy="18" r="1.800"/></svg>
<svg style="left:1598px;top:1022px" width="20" height="20"><circle cx="10" cy="10" r="9" stroke="#e8e8f4" stroke-width="1.700"/><circle cx="10" cy="10" r="5" fill="#f0f0fa"/></svg>
<svg style="left:1660px;top:1027px" width="20" height="10" class="w"><circle cx="4.500" cy="5" r="3.500"/><circle cx="15.500" cy="5" r="3.500"/><path d="M4.500 8.500h11"/></svg>
<svg style="left:1494px;top:909px" width="20" height="28" viewBox="0 0 20 28"><path d="M1 1v21l5-5 4 9 4-2-4-8h7z" fill="#111" stroke="#fff" stroke-width="1.400" stroke-linejoin="round"/></svg>

<!-- screen corners -->
<svg style="left:0;top:1068px" width="12" height="12"><path d="M0 0a12 12 0 0 0 12 12H0z" fill="#111"/></svg>
<svg style="left:1716px;top:1068px" width="12" height="12"><path d="M12 0a12 12 0 0 1-12 12h12z" fill="#111"/></svg>
</div></body></html>
